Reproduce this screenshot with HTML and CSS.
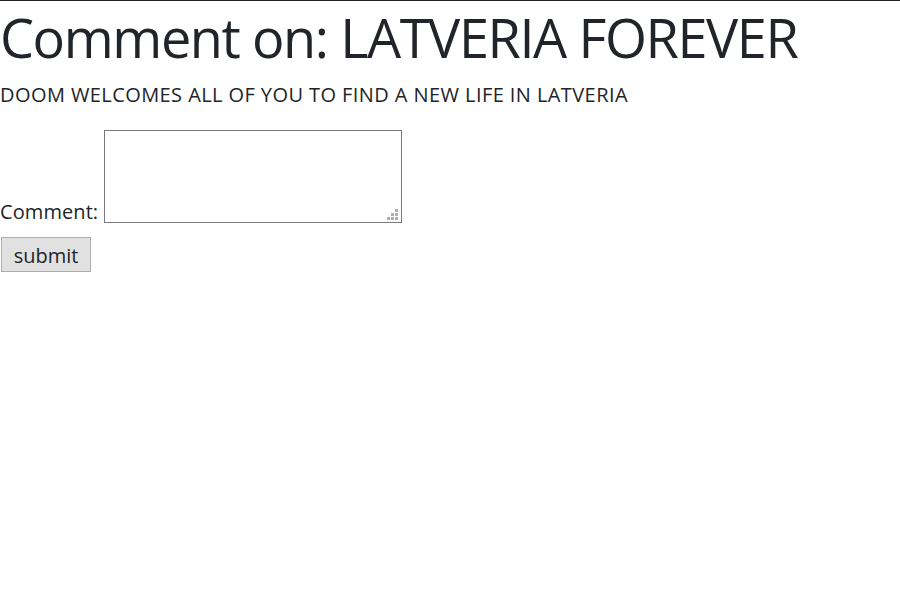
FILE: index.html
```html
<!DOCTYPE html>
<html>
<head>
<meta charset="utf-8">
<link rel="stylesheet" href="styles.css">
</head>
<body>
<div class="page">
  <h1 class="title">Comment on: LATVERIA FOREVER</h1>
  <p class="lead">DOOM WELCOMES ALL OF YOU TO FIND A NEW LIFE IN LATVERIA</p>
  <form class="comment-form">
    <div class="field">
      <label class="label" for="c">Comment:</label>
      <span class="box-wrap">
        <textarea id="c" class="box"></textarea>
        <span class="grip" aria-hidden="true">
          <i class="d d3"></i>
          <i class="d d2"></i><i class="d d3"></i>
          <i class="d d1"></i><i class="d d2"></i><i class="d d3"></i>
        </span>
      </span>
    </div>
    <button type="button" class="submit">submit</button>
  </form>
</div>
</body>
</html>
```
FILE: styles.css
```css
html, body {
  margin: 0;
  padding: 0;
  background: #fff;
}
.page {
  border-top: 1px solid #222;
  color: #212529;
  font-family: "Open Sans", "Noto Sans", sans-serif;
}
.title {
  margin: 4px 0 0 0;
  font-size: 54px;
  font-weight: 400;
  line-height: 64px;
  letter-spacing: -1.4px;
}
.lead {
  margin: 14px 0 0 0;
  font-size: 20px;
  line-height: 24px;
  letter-spacing: 0.42px;
}
.comment-form {
  margin-top: 23px;
}
.field {
  display: flex;
  align-items: flex-end;
  gap: 6px;
}
.label {
  font-size: 20px;
  line-height: 24px;
  letter-spacing: 0.08px;
  position: relative;
  top: 1px;
}
.box-wrap {
  position: relative;
  display: block;
  width: 298px;
  height: 93px;
}
.box {
  display: block;
  width: 298px;
  height: 93px;
  box-sizing: border-box;
  border: 1px solid #7a7a7a;
  margin: 0;
  padding: 2px;
  resize: none;
  outline: none;
}
.grip {
  position: absolute;
  right: 4px;
  bottom: 3px;
  display: grid;
  grid-template-columns: repeat(3, 3px);
  grid-template-rows: repeat(3, 3px);
  gap: 1px;
}
.d {
  display: block;
  width: 3px;
  height: 3px;
  background: #b0b0b0;
}
.d1 { grid-column: 1; }
.d2 { grid-column: 2; }
.d3 { grid-column: 3; }
.submit {
  display: block;
  margin: 14px 0 0 1px;
  width: 90px;
  height: 35px;
  box-sizing: border-box;
  background: #e1e1e1;
  border: 1px solid #adadad;
  border-radius: 0;
  font-family: "Open Sans", "Noto Sans", sans-serif;
  font-size: 20px;
  color: #212529;
  padding: 2px 0 0 0;
}
```
